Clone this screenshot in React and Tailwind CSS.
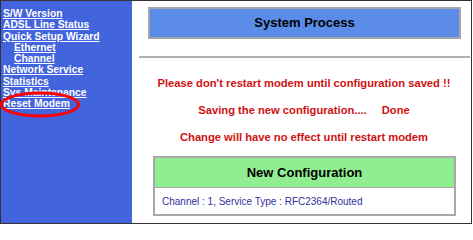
import React from 'react';

const links = [
    { label: 'S/W Version', indent: false },
    { label: 'ADSL Line Status', indent: false },
    { label: 'Quick Setup Wizard', indent: false },
    { label: 'Ethernet', indent: true },
    { label: 'Channel', indent: true },
    { label: 'Network Service', indent: false },
    { label: 'Statistics', indent: false },
    { label: 'Sys Maintenance', indent: false },
    { label: 'Reset Modem', indent: false },
];

export default function App() {
    return (
        <div className="w-[473px] h-[225px] bg-white font-['Liberation_Sans',Arial,sans-serif]">
            <div className="flex w-[472px] h-[224px] border border-[#333333]">
                {/* side menu */}
                <div className="relative w-[131px] shrink-0 bg-[#4264dc] pt-[7px] pl-[2px]">
                    {links.map((l) => (
                        <a
                            key={l.label}
                            href="#"
                            className={`block h-[11.3px] leading-[11.3px] text-[10.3px] font-bold text-white underline underline-offset-1 whitespace-nowrap ${l.indent ? 'pl-[11px]' : ''}`}
                        >
                            {l.label}
                        </a>
                    ))}
                    {/* hand drawn marker around Reset Modem */}
                    <svg className="absolute left-[-1px] top-[90px]" width="82" height="28" viewBox="0 0 82 28">
                        <ellipse cx="40" cy="13.5" rx="38.5" ry="11.5" fill="none" stroke="#ff0000" strokeWidth="3" />
                    </svg>
                </div>

                {/* main content */}
                <div className="flex-1 flex flex-col pt-[6px]">
                    <div className="ml-[16px] mr-[10px] h-[32px] flex items-center justify-center bg-[#5b8ce8] border-2 border-[#a3a6ad] text-[13px] font-bold text-black">
                        System Process
                    </div>
                    <div className="mt-[17px] ml-[7px] mr-[1px] h-[2px] bg-[#b0b0b0]" />
                    <div className="mt-[18px] flex flex-col items-center gap-[13px] pl-[5px] text-[11.2px] font-bold text-[#d01010] leading-[14px]">
                        <p>Please don't restart modem until configuration saved !!</p>
                        <p>
                            Saving the new configuration....<span className="ml-[15px]">Done</span>
                        </p>
                        <p>Change will have no effect until restart modem</p>
                    </div>
                    <div className="mt-[12px] ml-[21px] mr-[15px] border-2 border-[#a8a8a8]">
                        <div className="h-[30px] flex items-center justify-center bg-[#90ee90] border-b border-[#a8a8a8] text-[13px] font-bold text-black">
                            New Configuration
                        </div>
                        <div className="h-[26px] flex items-center pl-[7px] text-[10px] text-[#30309a]">
                            Channel : 1, Service Type : RFC2364/Routed
                        </div>
                    </div>
                </div>
            </div>
        </div>
    );
}
